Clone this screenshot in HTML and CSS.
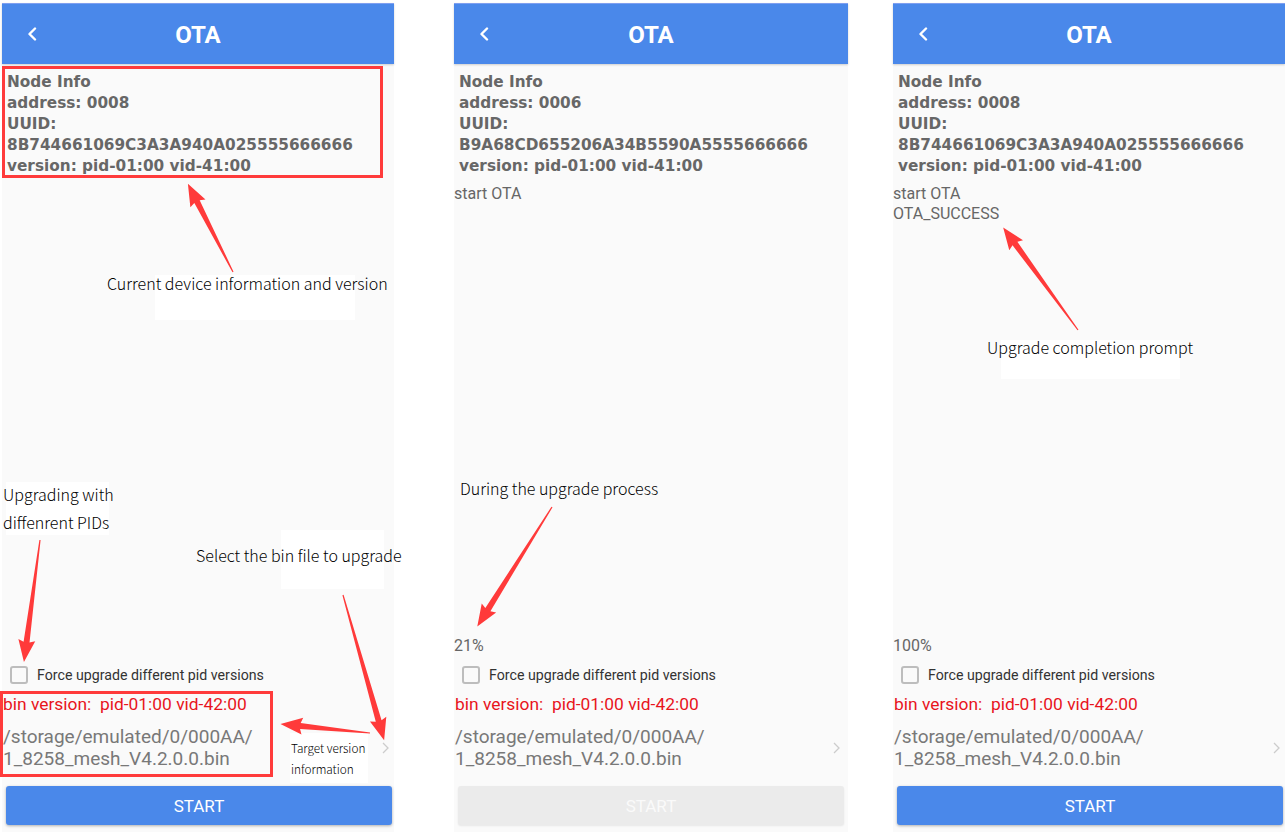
FILE: index.html
```html
<!DOCTYPE html>
<html lang="en">
<head>
<meta charset="utf-8">
<title>OTA</title>
<link rel="stylesheet" href="styles.css">
</head>
<body>
<div class="board">
  <section class="phone p1">
    <header class="bar">
      <svg class="back" width="10" height="14" viewBox="0 0 10 14"><polyline points="8,1.5 2.5,7 8,12.5"/></svg>
      <h1 class="title">OTA</h1>
    </header>
    <div class="content">
      <div class="info">
        <div>Node Info</div>
        <div>address: 0008</div>
        <div>UUID:</div>
        <div>8B744661069C3A3A940A025555666666</div>
        <div>version: pid-01:00 vid-41:00</div>
      </div>
      <div class="bottom">
        <label class="force"><span class="box"></span><span>Force upgrade different pid versions</span></label>
        <div class="binver">bin version:&nbsp; pid-01:00 vid-42:00</div>
        <div class="file">
          <div class="path">/storage/emulated/0/000AA/<br>1_8258_mesh_V4.2.0.0.bin</div>
          <svg class="chev" width="7" height="12" viewBox="0 0 7 12"><polyline points="1,1 6,6 1,11"/></svg>
        </div>
        <button class="btn">START</button>
      </div>
    </div>
  </section>

  <section class="phone p2">
    <header class="bar">
      <svg class="back" width="10" height="14" viewBox="0 0 10 14"><polyline points="8,1.5 2.5,7 8,12.5"/></svg>
      <h1 class="title">OTA</h1>
    </header>
    <div class="content">
      <div class="info">
        <div>Node Info</div>
        <div>address: 0006</div>
        <div>UUID:</div>
        <div>B9A68CD655206A34B5590A5555666666</div>
        <div>version: pid-01:00 vid-41:00</div>
      </div>
      <div class="log">
        <div>start OTA</div>
      </div>
      <div class="bottom">
        <div class="pct">21%</div>
        <label class="force"><span class="box"></span><span>Force upgrade different pid versions</span></label>
        <div class="binver">bin version:&nbsp; pid-01:00 vid-42:00</div>
        <div class="file">
          <div class="path">/storage/emulated/0/000AA/<br>1_8258_mesh_V4.2.0.0.bin</div>
          <svg class="chev" width="7" height="12" viewBox="0 0 7 12"><polyline points="1,1 6,6 1,11"/></svg>
        </div>
        <button class="btn disabled">START</button>
      </div>
    </div>
  </section>

  <section class="phone p3">
    <header class="bar">
      <svg class="back" width="10" height="14" viewBox="0 0 10 14"><polyline points="8,1.5 2.5,7 8,12.5"/></svg>
      <h1 class="title">OTA</h1>
    </header>
    <div class="content">
      <div class="info">
        <div>Node Info</div>
        <div>address: 0008</div>
        <div>UUID:</div>
        <div>8B744661069C3A3A940A025555666666</div>
        <div>version: pid-01:00 vid-41:00</div>
      </div>
      <div class="log">
        <div>start OTA</div>
        <div>OTA_SUCCESS</div>
      </div>
      <div class="bottom">
        <div class="pct">100%</div>
        <label class="force"><span class="box"></span><span>Force upgrade different pid versions</span></label>
        <div class="binver">bin version:&nbsp; pid-01:00 vid-42:00</div>
        <div class="file">
          <div class="path">/storage/emulated/0/000AA/<br>1_8258_mesh_V4.2.0.0.bin</div>
          <svg class="chev" width="7" height="12" viewBox="0 0 7 12"><polyline points="1,1 6,6 1,11"/></svg>
        </div>
        <button class="btn">START</button>
      </div>
    </div>
  </section>

  <div class="redbox rb1"></div>
  <div class="redbox rb2"></div>

  <div class="patch pa1"></div>
  <div class="patch pa2"></div>
  <div class="patch pa3"></div>
  <div class="patch pa4"></div>
  <div class="patch pa5"></div>

  <div class="note nt1">Current device information and version</div>
  <div class="note nt2">Upgrading with<br>diffenrent PIDs</div>
  <div class="note nt3">Select the bin file to upgrade</div>
  <div class="note small nt4">Target version<br>information</div>
  <div class="note nt5">During the upgrade process</div>
  <div class="note nt6">Upgrade completion prompt</div>

  <svg class="arrows" width="1285" height="832" viewBox="0 0 1285 832">
    <polygon points="0,-0.6 79,-3 77,-8.5 99,0 77,8.5 79,3 0,0.6" transform="translate(233,272) rotate(-117.1)"/>
    <polygon points="0,-0.6 103,-3 101,-8.5 123,0 101,8.5 103,3 0,0.6" transform="translate(40,540) rotate(97.5)"/>
    <polygon points="0,-0.6 131,-3 129,-8.5 151,0 129,8.5 131,3 0,0.6" transform="translate(343,595) rotate(74.2)"/>
    <polygon points="0,-0.6 70,-3 68,-8.5 90,0 68,8.5 70,3 0,0.6" transform="translate(370,733) rotate(-174.2)"/>
    <polygon points="0,-0.6 121,-3 119,-8.5 141,0 119,8.5 121,3 0,0.6" transform="translate(552,507) rotate(122)"/>
    <polygon points="0,-0.6 107,-3 105,-8.5 127,0 105,8.5 107,3 0,0.6" transform="translate(1078,330) rotate(-126.1)"/>
  </svg>
</div>
</body>
</html>
```

FILE: styles.css
```css
* { box-sizing: border-box; }
html, body { margin: 0; padding: 0; background: #ffffff; }
body { width: 1285px; height: 832px; overflow: hidden; font-family: Roboto, "Liberation Sans", sans-serif; }

.board {
  position: relative;
  width: 1285px;
  height: 832px;
  display: flex;
  align-items: flex-start;
  padding-top: 3px;
}

.phone {
  height: 829px;
  background: #fafafa;
  display: flex;
  flex-direction: column;
}
.p1 { width: 392px; margin-left: 2px; }
.p2 { width: 394px; margin-left: 60px; }
.p3 { width: 392px; margin-left: 45px; }

.bar {
  height: 61px;
  flex: none;
  background: #4a88ea;
  display: grid;
  grid-template-columns: 60px 1fr 60px;
  align-items: center;
  box-shadow: 0 1px 2px rgba(0,0,0,0.18);
  border-top: 1px solid #7f9ff0;
}
.back { justify-self: center; }
.back polyline { fill: none; stroke: #ffffff; stroke-width: 2.4; stroke-linecap: round; stroke-linejoin: round; }
.title {
  margin: 0;
  text-align: center;
  color: #ffffff;
  font: 700 24px/1 Roboto, sans-serif;
  padding-top: 2px;
}

.content {
  flex: 1;
  display: flex;
  flex-direction: column;
  padding-top: 8px;
}

.info {
  padding-left: 5px;
  font-family: "DejaVu Sans", sans-serif;
  font-weight: 700;
  font-size: 15.3px;
  line-height: 21px;
  color: #676767;
}

.log {
  margin-top: 7px;
  font-size: 16px;
  line-height: 20px;
  color: #666666;
}

.bottom {
  margin-top: auto;
  display: flex;
  flex-direction: column;
  padding-bottom: 7px;
}

.pct {
  height: 20px;
  line-height: 20px;
  font-size: 16px;
  color: #666666;
  margin-bottom: 4px;
}

.force {
  height: 28px;
  margin-top: 1px;
  display: flex;
  align-items: center;
  gap: 9px;
  padding-left: 8px;
  font-size: 14.2px;
  color: #333333;
}
.box {
  width: 18px;
  height: 18px;
  border: 2px solid #bdbdbd;
  border-radius: 3px;
  flex: none;
}

.binver {
  margin-top: 4px;
  padding-left: 1px;
  font-size: 17.4px;
  line-height: 22px;
  color: #e8141c;
}

.file {
  margin-top: 11px;
  display: flex;
  align-items: center;
  justify-content: space-between;
  padding-right: 5px;
}
.path {
  padding-left: 1px;
  font-size: 19px;
  line-height: 22px;
  color: #787878;
}
.chev polyline { fill: none; stroke: #cccccc; stroke-width: 1.3; }
.p2 .file { padding-right: 8px; }

.btn {
  margin: 16px 2px 0 4px;
  height: 39px;
  border: 0;
  border-radius: 3px;
  background: #4a88ea;
  color: #ffffff;
  font-family: Roboto, sans-serif;
  font-size: 17px;
  box-shadow: 0 1px 3px rgba(0,0,0,0.3);
}
.p2 .btn { margin-right: 4px; }
.btn.disabled {
  background: #ebebeb;
  color: #fafafa;
  box-shadow: 0 1px 2px rgba(0,0,0,0.08);
}

/* annotations overlay */
.redbox {
  position: absolute;
  border: 3px solid #ff3b3b;
}
.rb1 { left: 2px; top: 66px; width: 381px; height: 112px; }
.rb2 { left: 0; top: 691px; width: 273px; height: 86px; }

.patch { position: absolute; background: #ffffff; }
.pa1 { left: 155px; top: 275px; width: 200px; height: 45px; }
.pa2 { left: 6px; top: 482px; width: 103px; height: 53px; }
.pa3 { left: 281px; top: 530px; width: 103px; height: 59px; }
.pa4 { left: 290px; top: 733px; width: 78px; height: 50px; }
.pa5 { left: 1001px; top: 340px; width: 179px; height: 39px; }

.note {
  position: absolute;
  font-family: "Noto Sans CJK SC", "Noto Sans", sans-serif;
  font-weight: 300;
  font-size: 16px;
  line-height: 24px;
  color: #000000;
  white-space: nowrap;
}
.nt1 { left: 107px; top: 271px; }
.nt2 { left: 3px; top: 480px; line-height: 28px; }
.nt3 { left: 196px; top: 543px; }
.nt4 { left: 291px; top: 737px; font-size: 11.8px; line-height: 21px; }
.nt5 { left: 460px; top: 476px; }
.nt6 { left: 987px; top: 335px; }

.arrows {
  position: absolute;
  left: 0;
  top: 0;
  pointer-events: none;
}
.arrows polygon { fill: #ff3a3a; }
```
